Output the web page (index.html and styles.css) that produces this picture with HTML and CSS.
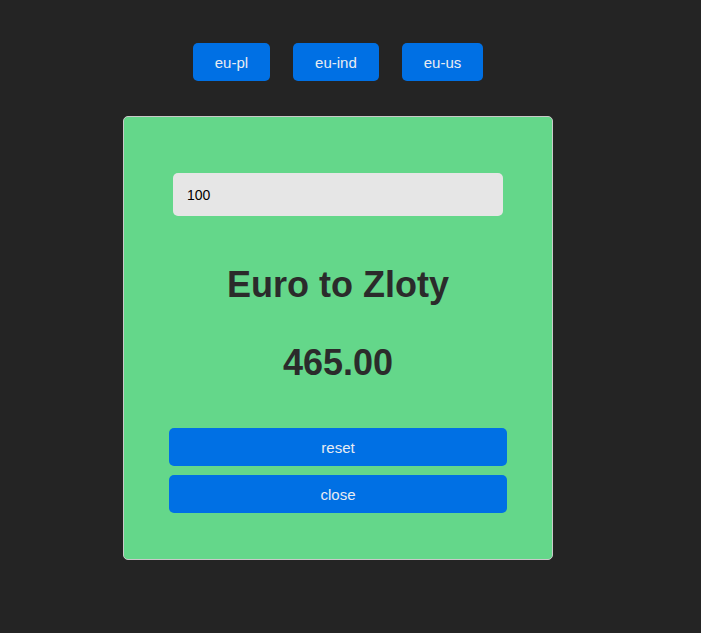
FILE: index.html
```html
<!DOCTYPE html>
<html>
<head>
<meta charset="utf-8">
<link rel="stylesheet" href="styles.css">
</head>
<body>
<div class="page">
  <nav class="tabs">
    <button class="btn tab">eu-pl</button>
    <button class="btn tab">eu-ind</button>
    <button class="btn tab">eu-us</button>
  </nav>
  <section class="card">
    <input class="amount" type="text" value="100">
    <h2 class="title">Euro to Zloty</h2>
    <p class="result">465.00</p>
    <div class="actions">
      <button class="btn wide">reset</button>
      <button class="btn wide">close</button>
    </div>
  </section>
</div>
</body>
</html>
```
FILE: styles.css
```css
html, body {
  margin: 0;
  padding: 0;
  background: #242424;
  font-family: "Liberation Sans", Arial, sans-serif;
}
.page {
  width: 676px;
  display: flex;
  flex-direction: column;
  align-items: center;
  padding-top: 43px;
}
.tabs {
  display: flex;
  gap: 23px;
}
.btn {
  background: #0070e4;
  color: #e8ecf2;
  border: none;
  border-radius: 5px;
  font-family: "Liberation Sans", Arial, sans-serif;
  font-size: 15px;
  height: 38px;
  cursor: pointer;
}
.tab {
  padding: 0 22px;
}
.card {
  box-sizing: border-box;
  width: 430px;
  height: 444px;
  margin-top: 35px;
  background: #64d78a;
  border: 1px solid #c9c9c9;
  border-radius: 5px;
  display: flex;
  flex-direction: column;
  align-items: center;
}
.amount {
  box-sizing: border-box;
  width: 330px;
  height: 43px;
  margin-top: 56px;
  border: none;
  border-radius: 5px;
  background: #e6e6e6;
  padding: 0 14px;
  font-family: "Liberation Sans", Arial, sans-serif;
  font-size: 14px;
  color: #000;
  outline: none;
}
.title, .result {
  margin: 0;
  font-size: 36px;
  line-height: 41px;
  font-weight: bold;
  color: #2b2b2b;
}
.title {
  margin-top: 48px;
}
.result {
  margin-top: 37px;
}
.actions {
  margin-top: 45px;
  display: flex;
  flex-direction: column;
  gap: 9px;
}
.wide {
  width: 338px;
}
```
